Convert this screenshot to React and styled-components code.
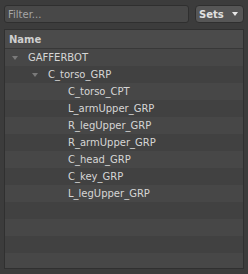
import React from "react";
import styled, { createGlobalStyle } from "styled-components";

const GlobalStyle = createGlobalStyle`
  html, body {
    margin: 0;
    padding: 0;
    background: #3c3c3c;
    font-family: "DejaVu Sans", sans-serif;
    font-size: 10px;
  }
`;

const items = [
  { name: "GAFFERBOT", depth: 0, open: true },
  { name: "C_torso_GRP", depth: 1, open: true },
  { name: "C_torso_CPT", depth: 2 },
  { name: "L_armUpper_GRP", depth: 2 },
  { name: "R_legUpper_GRP", depth: 2 },
  { name: "R_armUpper_GRP", depth: 2 },
  { name: "C_head_GRP", depth: 2 },
  { name: "C_key_GRP", depth: 2 },
  { name: "L_legUpper_GRP", depth: 2 },
];

const EMPTY_ROWS = 4;

const App = () => {
  return (
    <>
      <GlobalStyle />
      <Page>
        <Toolbar>
          <FilterInput placeholder="Filter..." />
          <SetsButton>
            Sets
            <Caret />
          </SetsButton>
        </Toolbar>
        <TreePanel>
          <Header>Name</Header>
          {items.map((item, i) => (
            <Row key={item.name} $light={i % 2 === 0}>
              <Indent $depth={item.depth} />
              <Expander>{item.open && <Arrow />}</Expander>
              <Label>{item.name}</Label>
            </Row>
          ))}
          {Array.from({ length: EMPTY_ROWS }).map((_, i) => (
            <Row key={"empty" + i} $light={(items.length + i) % 2 === 0} />
          ))}
        </TreePanel>
      </Page>
    </>
  );
};

export default App;

const Page = styled.div`
  width: 248px;
  height: 274px;
  box-sizing: border-box;
  padding: 5px 4px 5px 4px;
  display: flex;
  flex-direction: column;
  gap: 6px;
`;

const Toolbar = styled.div`
  display: flex;
  gap: 6px;
  height: 18px;
`;

const FilterInput = styled.input`
  flex: 1;
  min-width: 0;
  box-sizing: border-box;
  height: 18px;
  padding: 0 3px;
  border: 1px solid #2f2f2f;
  border-radius: 3px;
  background: #484848;
  color: #ddd;
  font-family: "DejaVu Sans", sans-serif;
  font-size: 10px;
  outline: none;

  &::placeholder {
    color: #a6a6a6;
  }
`;

const SetsButton = styled.button`
  width: 49px;
  height: 18px;
  box-sizing: border-box;
  display: flex;
  align-items: center;
  gap: 8px;
  padding: 0 0 0 3px;
  border: 1px solid #2f2f2f;
  border-radius: 4px;
  background: #565656;
  color: #e0e0e0;
  font-family: "DejaVu Sans", sans-serif;
  font-size: 10px;
  font-weight: bold;
`;

const Caret = styled.span`
  width: 0;
  height: 0;
  border-left: 3px solid transparent;
  border-right: 3px solid transparent;
  border-top: 4px solid #e8e8e8;
`;

const TreePanel = styled.div`
  flex: 1;
  display: flex;
  flex-direction: column;
  border: 1px solid #303030;
  background: #414141;
  overflow: hidden;
`;

const Header = styled.div`
  height: 18px;
  flex-shrink: 0;
  display: flex;
  align-items: center;
  padding-left: 4px;
  background: #4b4b4b;
  border-bottom: 1px solid #383838;
  color: #cfcfcf;
  font-weight: bold;
`;

const Row = styled.div`
  height: 17px;
  flex-shrink: 0;
  display: flex;
  align-items: center;
  background: ${(p) => (p.$light ? "#474747" : "#414141")};
`;

const Indent = styled.span`
  width: ${(p) => p.$depth * 20}px;
  flex-shrink: 0;
`;

const Expander = styled.span`
  width: 23px;
  flex-shrink: 0;
  display: flex;
  justify-content: flex-start;
  padding-left: 7px;
  box-sizing: border-box;
`;

const Arrow = styled.span`
  width: 0;
  height: 0;
  border-left: 3px solid transparent;
  border-right: 3px solid transparent;
  border-top: 4px solid #7a7a7a;
`;

const Label = styled.span`
  color: #d6d6d6;
  white-space: nowrap;
`;
